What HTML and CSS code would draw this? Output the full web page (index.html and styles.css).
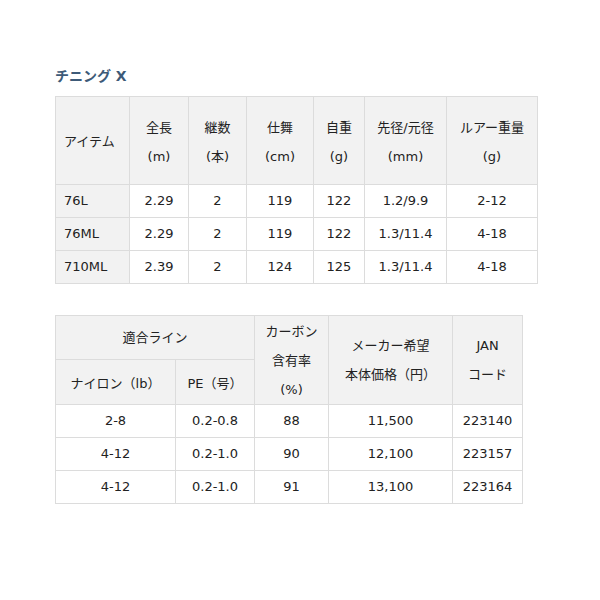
FILE: index.html
```html
<!DOCTYPE html>
<html lang="ja">
<head>
<meta charset="utf-8">
<link rel="stylesheet" href="styles.css">
</head>
<body>
<div class="page">
  <h2 class="title">チニング X</h2>
  <table class="spec spec1">
    <colgroup>
      <col style="width:74px"><col style="width:59px"><col style="width:58px"><col style="width:67px"><col style="width:51px"><col style="width:82px"><col style="width:91px">
    </colgroup>
    <tr class="head">
      <th class="left">アイテム</th>
      <th>全長<br>(m)</th>
      <th>継数<br>(本)</th>
      <th>仕舞<br>(cm)</th>
      <th>自重<br>(g)</th>
      <th>先径/元径<br>(mm)</th>
      <th>ルアー重量<br>(g)</th>
    </tr>
    <tr><th class="left item">76L</th><td>2.29</td><td>2</td><td>119</td><td>122</td><td>1.2/9.9</td><td>2-12</td></tr>
    <tr><th class="left item">76ML</th><td>2.29</td><td>2</td><td>119</td><td>122</td><td>1.3/11.4</td><td>4-18</td></tr>
    <tr><th class="left item">710ML</th><td>2.39</td><td>2</td><td>124</td><td>125</td><td>1.3/11.4</td><td>4-18</td></tr>
  </table>

  <table class="spec spec2">
    <colgroup>
      <col style="width:120px"><col style="width:79px"><col style="width:74px"><col style="width:124px"><col style="width:70px">
    </colgroup>
    <tr class="h1">
      <th colspan="2">適合ライン</th>
      <th rowspan="2">カーボン<br>含有率<br>(%)</th>
      <th rowspan="2">メーカー希望<br>本体価格（円）</th>
      <th rowspan="2">JAN<br>コード</th>
    </tr>
    <tr class="h2">
      <th>ナイロン（lb）</th>
      <th>PE（号）</th>
    </tr>
    <tr><td>2-8</td><td>0.2-0.8</td><td>88</td><td>11,500</td><td>223140</td></tr>
    <tr><td>4-12</td><td>0.2-1.0</td><td>90</td><td>12,100</td><td>223157</td></tr>
    <tr><td>4-12</td><td>0.2-1.0</td><td>91</td><td>13,100</td><td>223164</td></tr>
  </table>
</div>
</body>
</html>
```

FILE: styles.css
```css
html, body {
  margin: 0;
  padding: 0;
  background: #fff;
}
.page {
  padding: 66px 0 0 55px;
  font-family: "DejaVu Sans", Verdana, "Noto Sans CJK JP", sans-serif;
  font-size: 13px;
  color: #222;
}
.title {
  margin: 0 0 10px 0;
  font-size: 14px;
  line-height: 20px;
  font-weight: bold;
  color: #3d5a78;
  font-family: "DejaVu Sans", "Noto Sans CJK JP", sans-serif;
}
.spec {
  border-collapse: collapse;
  table-layout: fixed;
}
.spec th, .spec td {
  border: 1px solid #dcdcdc;
  padding: 0 6px;
  text-align: center;
  font-weight: normal;
  vertical-align: middle;
}
.spec th {
  background: #f2f2f2;
}
.spec td {
  background: #fff;
}
.spec .left {
  text-align: left;
  padding-left: 8px;
}
.spec1 {
  width: 482px;
}
.spec1 .head th {
  height: 88px;
  line-height: 29px;
  padding-top: 2px;
  box-sizing: border-box;
}
.spec1 tr td, .spec1 tr .item {
  height: 32px;
  line-height: 18px;
}
.spec2 {
  width: 467px;
  margin-top: 31px;
}
.spec2 .h1 th {
  height: 43px;
  line-height: 29px;
}
.spec2 .h2 th {
  height: 44px;
}
.spec2 td {
  height: 32px;
  line-height: 18px;
}
```
